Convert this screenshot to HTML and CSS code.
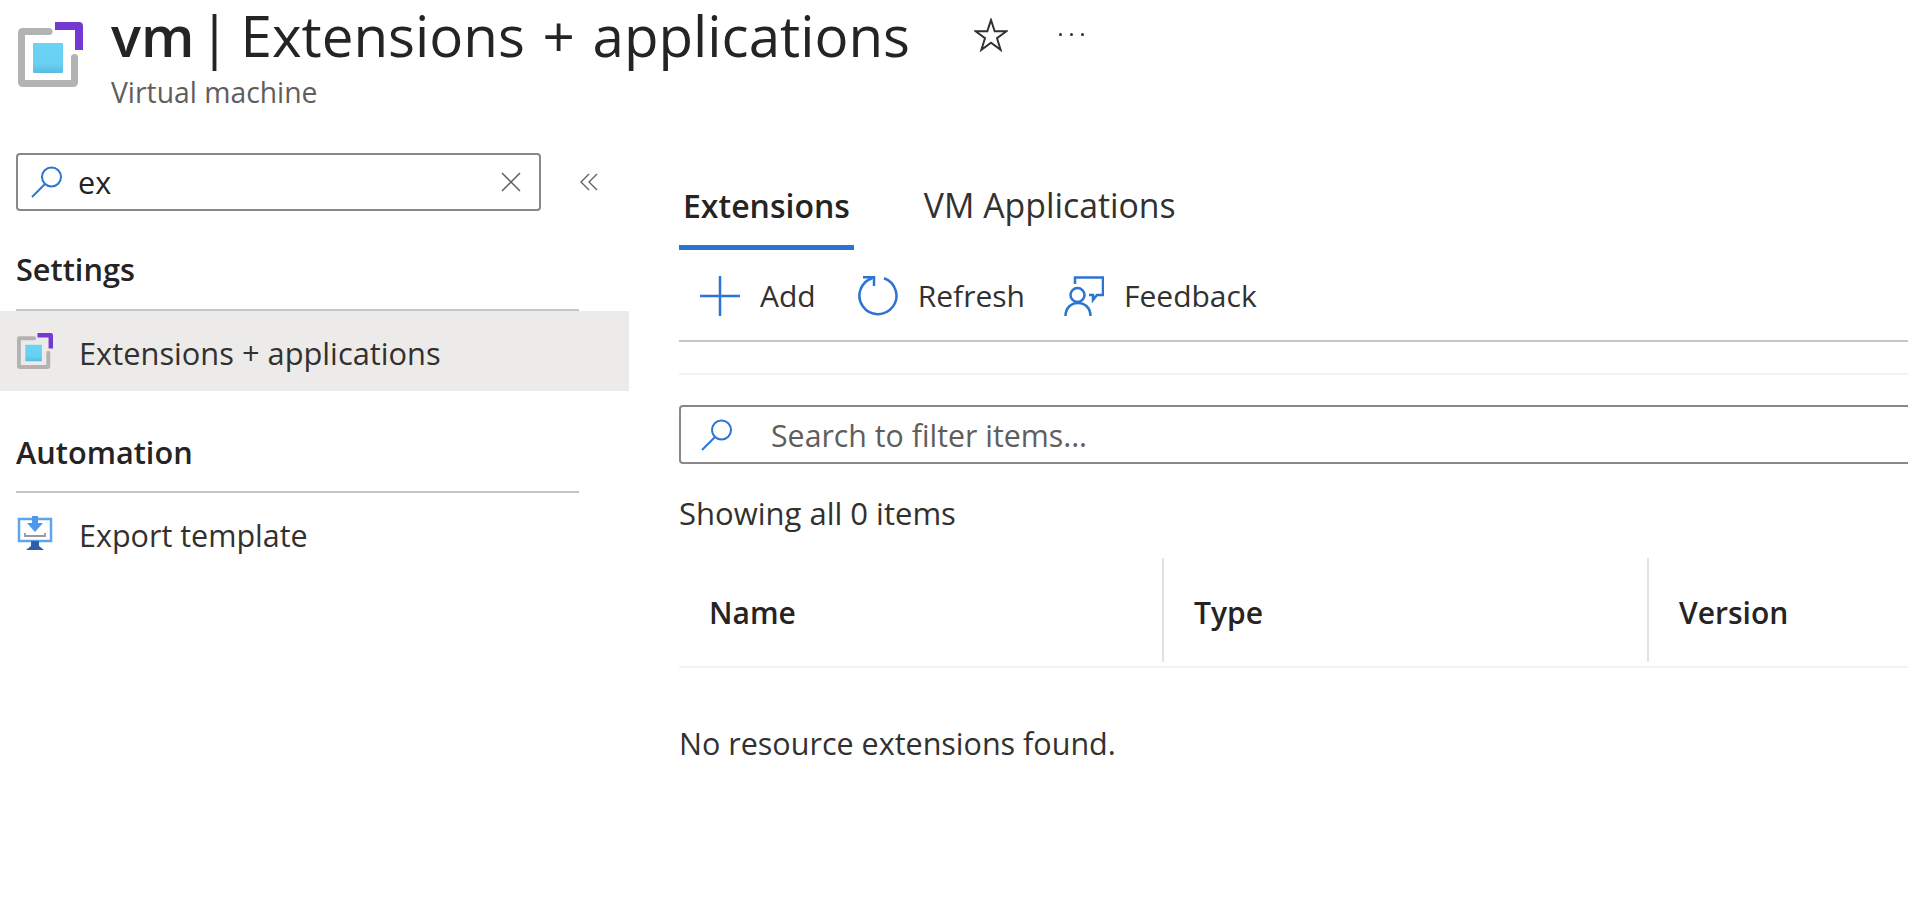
FILE: index.html
```html
<!DOCTYPE html>
<html lang="en">
<head>
    <meta charset="UTF-8">
    <meta name="viewport" content="width=device-width, initial-scale=1.0">
    <title>vm | Extensions + applications</title>
    <link rel="stylesheet" href="styles.css">
</head>
<body>

<svg class="defs" width="0" height="0">
    <defs>
        <linearGradient id="blue-fill" x1="0" y1="0" x2="0" y2="1">
            <stop offset="0" stop-color="#6bd4f5"/>
            <stop offset="0.7" stop-color="#68d0f1"/>
            <stop offset="1" stop-color="#59bbdf"/>
        </linearGradient>
        <symbol id="vm-icon" viewBox="0 0 65 65">
            <path d="M31 9.500H4.500a1 1 0 0 0-1 1V60.500a1 1 0 0 0 1 1h51a1 1 0 0 0 1-1V35.500" fill="none" stroke="#b3b3b3" stroke-width="7" stroke-linecap="round"/>
            <path d="M37 4H61V28" fill="none" stroke="#7339d1" stroke-width="8" stroke-linejoin="round"/>
            <rect x="15" y="21" width="30" height="30" rx="1" fill="url(#blue-fill)"/>
        </symbol>
        <symbol id="search-icon" viewBox="0 0 32 32">
            <circle cx="20.500" cy="11" r="9.500" fill="none" stroke="#2b74d2" stroke-width="2"/>
            <path d="M14 18L1 31" fill="none" stroke="#2b74d2" stroke-width="2"/>
        </symbol>
    </defs>
</svg>

<header class="page-header">
    <svg class="logo"><use href="#vm-icon"/></svg>
    <div class="heading">
        <div class="title-row">
            <h1 class="title"><b>vm </b><span class="sep">| </span>Extensions + applications</h1>
            <svg class="star" viewBox="0 0 34 34">
                <path d="M17 2L20.700 13.200H32.500L23 20.200L26.600 31.800L17 24.700L7.400 31.800L11 20.200L1.500 13.200H13.300Z" fill="none" stroke="#323130" stroke-width="2"/>
            </svg>
            <div class="dots"><i></i><i></i><i></i></div>
        </div>
        <div class="subtitle">Virtual machine</div>
    </div>
</header>

<div class="content">
    <nav class="sidebar">
        <div class="side-search-row">
            <div class="searchbox side-search">
                <svg class="search-icon"><use href="#search-icon"/></svg>
                <span class="search-value">ex</span>
                <svg class="clear" viewBox="0 0 20 20">
                    <path d="M1 1L19 19M19 1L1 19" fill="none" stroke="#605e5c" stroke-width="1.500"/>
                </svg>
            </div>
            <svg class="collapse" viewBox="0 0 18 18">
                <path d="M9 1L1 9L9 17M17 1L9 9L17 17" fill="none" stroke="#605e5c" stroke-width="1.300"/>
            </svg>
        </div>

        <div class="group-title first">Settings</div>
        <a class="nav-item active">
            <svg class="nav-icon"><use href="#vm-icon"/></svg>
            <span class="nav-label wide-label">Extensions + applications</span>
        </a>

        <div class="group-title">Automation</div>
        <a class="nav-item">
            <svg class="nav-icon" viewBox="0 0 36 36">
                <rect x="2" y="4" width="32" height="22" fill="#fff" stroke="#5ea4ee" stroke-width="2.500"/>
                <path d="M8 18V21H28V18" fill="none" stroke="#9a9a9a" stroke-width="1.800"/>
                <path d="M15 1H21V8H26L18 17L10 8H15Z" fill="#4f97ea"/>
                <path d="M14 26H22V31L27 35H9L14 31Z" fill="#2f5fa9"/>
            </svg>
            <span class="nav-label">Export template</span>
        </a>
    </nav>

    <main class="main">
        <div class="tabs">
            <div class="tab active">Extensions</div>
            <div class="tab">VM Applications</div>
        </div>

        <div class="toolbar">
            <div class="tool tool-add">
                <svg class="tool-icon" viewBox="0 0 40 40">
                    <path d="M20 0V40M0 20H40" fill="none" stroke="#2b74d2" stroke-width="2.500"/>
                </svg>
                <span>Add</span>
            </div>
            <div class="tool">
                <svg class="tool-icon" viewBox="0 0 40 40">
                    <path d="M26 2.200A18.500 18.500 0 1 1 14.500 2" fill="none" stroke="#2b74d2" stroke-width="2.500"/>
                    <path d="M5 1.200H16V10" fill="none" stroke="#2b74d2" stroke-width="2.500"/>
                </svg>
                <span>Refresh</span>
            </div>
            <div class="tool">
                <svg class="tool-icon" viewBox="0 0 40 40">
                    <path d="M11 8V1.500H39V19H33L29 24V19H25" fill="none" stroke="#2b74d2" stroke-width="2.500"/>
                    <circle cx="13.500" cy="19" r="7" fill="none" stroke="#2b74d2" stroke-width="2.500"/>
                    <path d="M1.500 40C1.500 32 7 27 14 27S26.500 32 26.500 40" fill="none" stroke="#2b74d2" stroke-width="2.500"/>
                </svg>
                <span>Feedback</span>
            </div>
        </div>

        <div class="spacer-band"></div>

        <div class="searchbox filter">
            <svg class="search-icon"><use href="#search-icon"/></svg>
            <span class="placeholder">Search to filter items...</span>
        </div>

        <div class="count">Showing all 0 items</div>

        <div class="grid-head">
            <div class="col">Name</div>
            <div class="col">Type</div>
            <div class="col">Version</div>
        </div>

        <div class="empty">No resource extensions found.</div>
    </main>
</div>

</body>
</html>
```

FILE: styles.css
```css
html, body {
    margin: 0;
    height: 100%;
    overflow: hidden;
}
body {
    background: #fff;
    color: #323130;
    font-family: "Open Sans", "Noto Sans", sans-serif;
    font-size: 30.5px;
}
.defs {
    display: block;
    height: 0;
}
.page-header {
    display: flex;
    height: 120px;
    padding-left: 18px;
}
.logo {
    width: 65px;
    height: 65px;
    margin-top: 22px;
    flex: none;
}
.heading {
    margin-left: 28px;
}
.title-row {
    display: flex;
    align-items: flex-start;
}
.title {
    margin: 0;
    font-size: 56.500px;
    font-weight: 400;
    line-height: 70px;
    word-spacing: 3px;
    white-space: pre;
    color: #252423;
}
.title b {
    font-size: 56px;
    font-weight: 600;
    word-spacing: -10px;
}
.sep {
    word-spacing: -4px;
}
.star {
    width: 34px;
    height: 34px;
    margin: 18px 0 0 64px;
    flex: none;
}
.dots {
    display: flex;
    gap: 8px;
    margin: 33px 0 0 51px;
}
.dots i {
    width: 3px;
    height: 3px;
    border-radius: 50%;
    background: #323130;
}
.subtitle {
    margin-top: 4px;
    font-size: 28.300px;
    line-height: 34px;
    color: #605e5c;
}
.content {
    display: flex;
}
.sidebar {
    width: 629px;
    flex: none;
}
.side-search-row {
    display: flex;
    align-items: center;
    padding: 33px 0 0 16px;
}
.searchbox {
    display: flex;
    align-items: center;
    box-sizing: border-box;
    height: 58px;
    border: 2px solid #8a8886;
    border-radius: 4px;
    background: #fff;
}
.side-search {
    width: 525px;
    padding: 0 18px 0 13px;
}
.search-icon {
    width: 32px;
    height: 32px;
    flex: none;
}
.search-value {
    margin-left: 15px;
    flex: 1;
    color: #252423;
}
.clear {
    width: 20px;
    height: 20px;
    flex: none;
}
.collapse {
    width: 18px;
    height: 18px;
    margin-left: 39px;
    flex: none;
}
.group-title {
    box-sizing: border-box;
    width: 563px;
    height: 58px;
    margin: 44px 0 0 16px;
    border-bottom: 2px solid #c8c6c4;
    font-size: 30.700px;
    font-weight: 600;
    line-height: 35px;
    color: #252423;
}
.group-title.first {
    height: 59px;
    margin-top: 41px;
}
.nav-item {
    display: flex;
    align-items: center;
    height: 80px;
    padding-left: 17px;
    gap: 26px;
}
.nav-item.active {
    background: #edebe9;
}
.nav-label {
    padding-top: 3px;
}
.wide-label {
    font-size: 30.800px;
}
.nav-icon {
    width: 36px;
    height: 36px;
    flex: none;
}
.main {
    flex: 1;
    min-width: 0;
    padding-left: 50px;
}
.tabs {
    display: flex;
    gap: 66px;
    margin-top: 60px;
    height: 70px;
}
.tab {
    box-sizing: border-box;
    height: 70px;
    padding: 0 4px;
    font-size: 33.800px;
    line-height: 51px;
    white-space: nowrap;
}
.tab.active {
    border-bottom: 5px solid #2b74d2;
    font-size: 32px;
    font-weight: 600;
    color: #252423;
}
.toolbar {
    display: flex;
    align-items: center;
    gap: 39px;
    box-sizing: border-box;
    height: 92px;
    padding: 2px 0 0 21px;
    border-bottom: 2px solid #c8c6c4;
}
.tool {
    display: flex;
    align-items: center;
    gap: 20px;
    font-size: 30px;
    line-height: 40px;
}
.tool-add {
    margin-right: 3px;
}
.tool-icon {
    width: 40px;
    height: 40px;
    flex: none;
}
.spacer-band {
    height: 31px;
    border-bottom: 2px solid #f3f2f1;
}
.filter {
    height: 59px;
    margin-top: 30px;
    margin-right: -4px;
    padding-left: 20px;
}
.placeholder {
    margin-left: 38px;
    padding-top: 2px;
    font-size: 30.300px;
    color: #605e5c;
}
.count {
    margin-top: 29px;
    font-size: 31px;
    line-height: 40px;
}
.grid-head {
    display: grid;
    grid-template-columns: 485px 485px 1fr;
    height: 108px;
    margin-top: 25px;
    border-bottom: 2px solid #f3f2f1;
}
.col {
    box-sizing: border-box;
    height: 104px;
    padding-left: 30px;
    font-size: 30px;
    line-height: 110px;
    font-weight: 600;
    border-right: 2px solid #e3e2e1;
    color: #252423;
}
.col:last-child {
    border-right: 0;
}
.empty {
    margin-top: 55px;
    line-height: 40px;
}
```
